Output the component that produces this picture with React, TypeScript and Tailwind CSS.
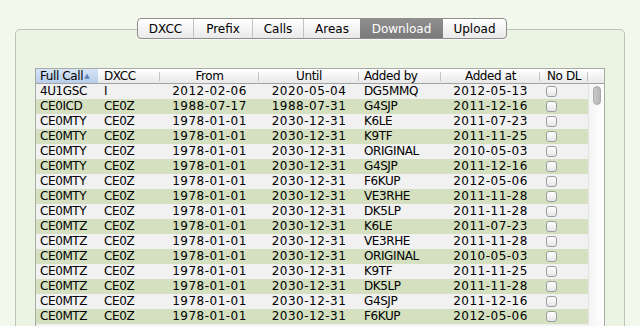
import React from "react";

type Row = [string, string, string, string, string, string];

const rows: Row[] = [
  ["4U1GSC", "I", "2012-02-06", "2020-05-04", "DG5MMQ", "2012-05-13"],
  ["CE0ICD", "CE0Z", "1988-07-17", "1988-07-31", "G4SJP", "2011-12-16"],
  ["CE0MTY", "CE0Z", "1978-01-01", "2030-12-31", "K6LE", "2011-07-23"],
  ["CE0MTY", "CE0Z", "1978-01-01", "2030-12-31", "K9TF", "2011-11-25"],
  ["CE0MTY", "CE0Z", "1978-01-01", "2030-12-31", "ORIGINAL", "2010-05-03"],
  ["CE0MTY", "CE0Z", "1978-01-01", "2030-12-31", "G4SJP", "2011-12-16"],
  ["CE0MTY", "CE0Z", "1978-01-01", "2030-12-31", "F6KUP", "2012-05-06"],
  ["CE0MTY", "CE0Z", "1978-01-01", "2030-12-31", "VE3RHE", "2011-11-28"],
  ["CE0MTY", "CE0Z", "1978-01-01", "2030-12-31", "DK5LP", "2011-11-28"],
  ["CE0MTZ", "CE0Z", "1978-01-01", "2030-12-31", "K6LE", "2011-07-23"],
  ["CE0MTZ", "CE0Z", "1978-01-01", "2030-12-31", "VE3RHE", "2011-11-28"],
  ["CE0MTZ", "CE0Z", "1978-01-01", "2030-12-31", "ORIGINAL", "2010-05-03"],
  ["CE0MTZ", "CE0Z", "1978-01-01", "2030-12-31", "K9TF", "2011-11-25"],
  ["CE0MTZ", "CE0Z", "1978-01-01", "2030-12-31", "DK5LP", "2011-11-28"],
  ["CE0MTZ", "CE0Z", "1978-01-01", "2030-12-31", "G4SJP", "2011-12-16"],
  ["CE0MTZ", "CE0Z", "1978-01-01", "2030-12-31", "F6KUP", "2012-05-06"],
  ["", "", "", "", "", ""],
];

const tabs = [
  { label: "DXCC", w: "w-[55px]" },
  { label: "Prefix", w: "w-[59px]" },
  { label: "Calls", w: "w-[51px]" },
  { label: "Areas", w: "w-[57px]" },
  { label: "Download", w: "w-[83px]", active: true },
  { label: "Upload", w: "w-[63px]" },
];

function Divider() {
  return <div className="absolute right-0 top-[3px] h-[9px] w-px bg-[#c4c4c4]" />;
}

function Checkbox() {
  return (
    <div className="h-[11px] w-[11px] rounded-[3px] border border-[#9c9c9c] bg-gradient-to-b from-white to-[#e6e6e6]" />
  );
}

export default function App() {
  return (
    <div className="w-[640px] h-[326px] overflow-hidden bg-[#f3f8ec] font-['DejaVu_Sans',sans-serif] text-[12px] text-black">
      <div className="flex flex-col pt-[18px] px-[15px]">
        {/* Segmented control */}
        <div className="relative z-10 flex justify-center pl-[4px]">
          <div className="flex h-[21px] rounded-[4px] border border-[#8e8e8e] bg-gradient-to-b from-white to-[#e9e9e9] shadow-[0_1px_0_rgba(255,255,255,0.6)] overflow-hidden">
            {tabs.map((t, i) => (
              <div
                key={t.label}
                className={`${t.w} flex items-center justify-center leading-none ${
                  t.active
                    ? "bg-gradient-to-b from-[#8f8f8f] to-[#7a7a7a] text-white"
                    : ""
                } ${i > 0 && !t.active && !tabs[i - 1].active ? "border-l border-[#c2c2c2]" : ""}`}
              >
                {t.label}
              </div>
            ))}
          </div>
        </div>

        {/* Panel */}
        <div className="-mt-[10px] h-[320px] rounded-[5px] border border-[#bcc4b4] bg-[#ebf3e2] pt-[38px] px-[19px]">
          <div className="w-[570px] border border-[#a9a9a9] bg-white">
            {/* header */}
            <div className="flex h-[15px] border-b border-[#a3a3a3] bg-gradient-to-b from-white to-[#e9e9e9] leading-[14px] tracking-[-0.4px]">
              <div className="relative flex w-[62px] items-center bg-gradient-to-b from-[#d6e4f6] to-[#b8cdeb] pl-[4px]">
                <span>Full Call</span>
                <span className="ml-[1px] text-[7px] leading-none text-[#5c7fb3]">▲</span>
              </div>
              <div className="relative w-[62px] pl-[6px]">
                DXCC
                <Divider />
              </div>
              <div className="relative w-[99px] text-center">
                From
                <Divider />
              </div>
              <div className="relative w-[100px] text-center">
                Until
                <Divider />
              </div>
              <div className="relative w-[82px] pl-[5px]">
                Added by
                <Divider />
              </div>
              <div className="relative w-[99px] text-center">
                Added at
                <Divider />
              </div>
              <div className="relative w-[48px] text-center">
                No DL
                <Divider />
              </div>
              <div className="w-[16px]" />
            </div>

            {/* body */}
            <div className="flex">
              <div className="flex flex-col">
                {rows.map((r, i) => (
                  <div
                    key={i}
                    className={`flex h-[15px] items-center leading-[15px] ${
                      i % 2 === 0 ? "bg-[#f1f1f1]" : "bg-[#d4e0bf]"
                    }`}
                  >
                    <div className="w-[62px] pl-[4px] tracking-[-0.4px]">{r[0]}</div>
                    <div className="w-[62px] pl-[6px] tracking-[-0.4px]">{r[1]}</div>
                    <div className="w-[99px] text-center tracking-[0.5px]">{r[2]}</div>
                    <div className="w-[100px] text-center tracking-[0.5px]">{r[3]}</div>
                    <div className="w-[82px] pl-[5px] tracking-[-0.4px]">{r[4]}</div>
                    <div className="w-[99px] text-center tracking-[0.5px]">{r[5]}</div>
                    <div className="flex w-[48px] pl-[6px]">{r[0] && <Checkbox />}</div>
                  </div>
                ))}
              </div>
              {/* scrollbar */}
              <div className="w-[16px] border-l border-[#e2e2e2] bg-gradient-to-r from-[#f4f4f4] to-white pt-[2px] pl-[4px]">
                <div className="h-[19px] w-[8px] rounded-full border border-[#a9a9a9] bg-gradient-to-r from-[#c9c9c9] to-[#b5b5b5]" />
              </div>
            </div>
          </div>
        </div>
      </div>
    </div>
  );
}
